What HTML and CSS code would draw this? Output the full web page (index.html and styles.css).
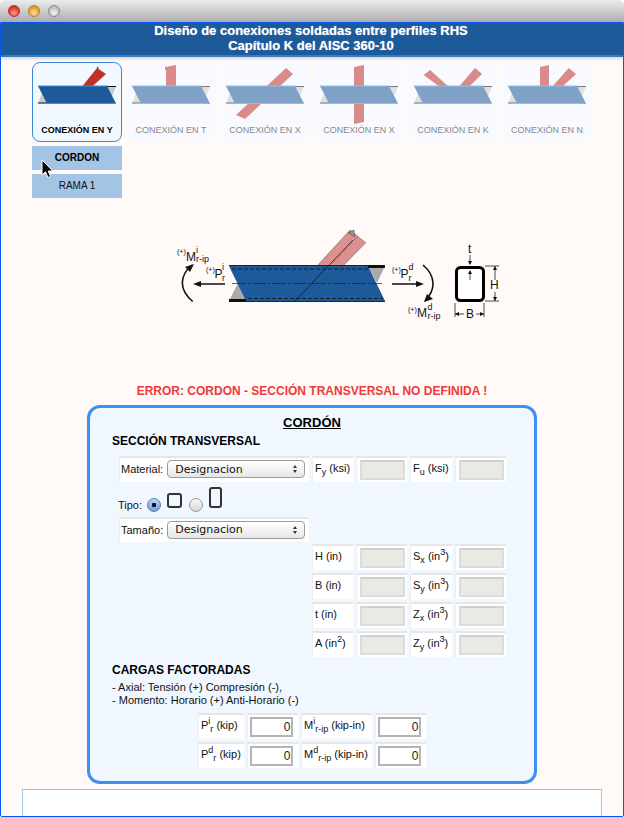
FILE: index.html
```html
<!DOCTYPE html>
<html lang="es">
<head>
    <meta charset="UTF-8">
    <meta name="viewport" content="width=device-width, initial-scale=1.0">
    <title>Diseño de conexiones soldadas entre perfiles RHS</title>
    <link rel="stylesheet" href="styles.css">
</head>
<body>
    <svg class="defs">
        <symbol id="chord" viewBox="0 0 90 60" overflow="visible">
            <polygon points="75,24 84,24 79.5,36" fill="#c9c9c9"/>
            <rect x="75" y="24" width="9" height="1" fill="#111"/>
            <polygon points="6,41.5 15,41.5 10.5,30" fill="#c9c9c9"/>
            <rect x="6" y="40.5" width="9" height="1" fill="#111"/>
            <polygon points="6,24 75,24 84,41.5 15,41.5" fill="#1d5a99"/>
            <path d="M6 24H75M15 41.5H84" stroke="#3d8ee6" stroke-width="1"/>
        </symbol>
    </svg>

    <div class="titlebar">
        <span class="light red"></span>
        <span class="light orange"></span>
        <span class="light gray"></span>
    </div>

    <div class="frame">
        <div class="header">Diseño de conexiones soldadas entre perfiles RHS<br>Capítulo K del AISC 360-10</div>

        <div class="tabs">
            <div class="tab active">
                <svg viewBox="1 1 88 60">
                    <polygon points="65,6 74,12 59.7,25 49.7,25" fill="#c0302a"/>
                    <polygon points="65,6 67,7.5 65.5,4" fill="#333"/>
                    <use href="#chord" width="90" height="60"/>
                </svg>
                <span>CONEXIÓN EN Y</span>
            </div>
            <div class="tab">
                <svg viewBox="1 1 88 60">
                    <polygon points="40,5 50,3 50,25 40,25" fill="#c0302a"/>
                    <polygon points="39,3 41,8 39,8" fill="#555"/>
                    <use href="#chord" width="90" height="60"/>
                </svg>
                <span>CONEXIÓN EN T</span>
            </div>
            <div class="tab">
                <svg viewBox="1 1 88 60">
                    <polygon points="66,6 73,12 25,57 16,53" fill="#c0302a"/>
                    <use href="#chord" width="90" height="60"/>
                </svg>
                <span>CONEXIÓN EN X</span>
            </div>
            <div class="tab">
                <svg viewBox="1 1 88 60">
                    <polygon points="40,5 50,3 50,60 40,62" fill="#c0302a"/>
                    <use href="#chord" width="90" height="60"/>
                </svg>
                <span>CONEXIÓN EN X</span>
            </div>
            <div class="tab">
                <svg viewBox="1 1 88 60">
                    <polygon points="22,8 15.6,13 32,25 41,25" fill="#c0302a"/>
                    <polygon points="67,6 74,12 60.7,25 50.7,25" fill="#c0302a"/>
                    <use href="#chord" width="90" height="60"/>
                </svg>
                <span>CONEXIÓN EN K</span>
            </div>
            <div class="tab">
                <svg viewBox="1 1 88 60">
                    <polygon points="38,5 47,3 47,25 38,25" fill="#c0302a"/>
                    <polygon points="66.7,6 74,12 60,25 50,25" fill="#c0302a"/>
                    <use href="#chord" width="90" height="60"/>
                </svg>
                <span>CONEXIÓN EN N</span>
            </div>
        </div>

        <div class="member selected">CORDON</div>
        <div class="member">RAMA 1</div>

        <svg class="diagram" width="340" height="110" viewBox="0 0 340 110">
            <!-- rama -->
            <polygon points="180,10 195.7,22.7 173,46 147,46" fill="#dc9090" stroke="#555" stroke-width=".5"/>
            <path d="M188 16L160 46" stroke="#a33" stroke-width=".5" stroke-dasharray="6 2"/>
            <polygon points="178.5,13 184,10 184.5,16.500" fill="#999" stroke="#333" stroke-width=".5"/>
            <!-- cordon -->
            <polygon points="198,46 215,46 207,63" fill="#aaa"/>
            <polygon points="59,81 76,81 68,63" fill="#aaa"/>
            <polygon points="59,46 198,46 215,81 76,81" fill="#1d5a99"/>
            <rect x="198" y="45" width="17" height="3" fill="#111"/>
            <rect x="59" y="79" width="17" height="3" fill="#111"/>
            <path d="M59 45.500H198M76 81.500H215" stroke="#222" stroke-width="1"/>
            <path d="M62 49H200M78 78.500H213" stroke="#111" stroke-width=".8" stroke-dasharray="4 2"/>
            <path d="M62 63.500H212" stroke="#222" stroke-width=".7" stroke-dasharray="14 2 2 2"/>
            <path d="M125 81L183 20" stroke="#111" stroke-width=".7"/>
            <!-- fuerzas -->
            <g class="force">
                <path d="M55 64H27M222 64H250"/>
                <path d="M22.700 81.500C9 70 9 56 22 45M253 45C266 56 266 70 255 81"/>
            </g>
            <g class="heads">
                <polygon points="23,64 31,61 31,67"/>
                <polygon points="254,64 246,61 246,67"/>
                <polygon points="24,44 15,47 20,52"/>
                <polygon points="254,82 263,79 257,74"/>
            </g>
            <g class="label">
                <text x="7" y="34" class="tiny">(+)</text><text x="16" y="41">M</text><text x="26" y="33" class="small">i</text><text x="26" y="42" class="small">r-ip</text>
                <text x="36" y="52" class="tiny">(+)</text><text x="44.500" y="58">P</text><text x="52" y="50" class="small">i</text><text x="52" y="61" class="small">r</text>
                <text x="222" y="52" class="tiny">(+)</text><text x="230.500" y="58">P</text><text x="238.500" y="50" class="small">d</text><text x="238.500" y="61" class="small">r</text>
                <text x="238" y="92" class="tiny">(+)</text><text x="247" y="97">M</text><text x="257.500" y="90" class="small">d</text><text x="257.500" y="99" class="small">r-ip</text>
            </g>
            <!-- seccion -->
            <rect x="286.500" y="47.500" width="27" height="33" rx="4" fill="#fff" stroke="#000" stroke-width="3"/>
            <g class="dim">
                <path d="M300 35V44M300 52V60M315 46H329M315 81H329M325 46V60M325 72V81M285 83V97M314 83V97M285 94H294M306 94H314"/>
            </g>
            <g class="heads">
                <polygon points="300,45 298,41 302,41"/>
                <polygon points="300,50 298,54 302,54"/>
                <polygon points="325,46 323,50 327,50"/>
                <polygon points="325,81 323,77 327,77"/>
                <polygon points="285,94 289,92 289,96"/>
                <polygon points="314,94 310,92 310,96"/>
            </g>
            <g class="label">
                <text x="298" y="33">t</text>
                <text x="320" y="69">H</text>
                <text x="296" y="98">B</text>
            </g>
        </svg>

        <div class="error">ERROR: CORDON - SECCIÓN TRANSVERSAL NO DEFINIDA !</div>

        <div class="panel">
            <div class="panel-title">CORDÓN</div>
            <div class="heading first">SECCIÓN TRANSVERSAL</div>

            <div class="row-top">
                <div class="cell pick">
                    <span>Material:</span>
                    <span class="select"><select><option>Designacion</option></select></span>
                </div>
                <div class="cell">F<sub>y</sub> (ksi)</div>
                <div class="cell box"><input disabled></div>
                <div class="cell">F<sub>u</sub> (ksi)</div>
                <div class="cell box"><input disabled></div>
            </div>

            <div class="tipo">
                <span class="tipo-label">Tipo:</span>
                <input type="radio" name="tipo" class="radio" checked>
                <span class="shape square"></span>
                <input type="radio" name="tipo" class="radio">
                <span class="shape tall"></span>
            </div>

            <div class="cell pick size">
                <span>Tamaño:</span>
                <span class="select"><select><option>Designacion</option></select></span>
            </div>

            <div class="props">
                <div class="cell">H (in)</div>
                <div class="cell box"><input disabled></div>
                <div class="cell">S<sub>x</sub> (in<sup>3</sup>)</div>
                <div class="cell box"><input disabled></div>
                <div class="cell">B (in)</div>
                <div class="cell box"><input disabled></div>
                <div class="cell">S<sub>y</sub> (in<sup>3</sup>)</div>
                <div class="cell box"><input disabled></div>
                <div class="cell">t (in)</div>
                <div class="cell box"><input disabled></div>
                <div class="cell">Z<sub>x</sub> (in<sup>3</sup>)</div>
                <div class="cell box"><input disabled></div>
                <div class="cell">A (in<sup>2</sup>)</div>
                <div class="cell box"><input disabled></div>
                <div class="cell">Z<sub>y</sub> (in<sup>3</sup>)</div>
                <div class="cell box"><input disabled></div>
            </div>

            <div class="heading">CARGAS FACTORADAS</div>
            <p class="notes">- Axial: Tensión (+) Compresión (-),<br>- Momento: Horario (+) Anti-Horario (-)</p>

            <div class="loads">
                <div class="cell">P<sup>i</sup><sub>r</sub> (kip)</div>
                <div class="cell box"><input class="value" value="0"></div>
                <div class="cell">M<sup>i</sup><sub>r-ip</sub> (kip-in)</div>
                <div class="cell box"><input class="value" value="0"></div>
                <div class="cell">P<sup>d</sup><sub>r</sub> (kip)</div>
                <div class="cell box"><input class="value" value="0"></div>
                <div class="cell">M<sup>d</sup><sub>r-ip</sub> (kip-in)</div>
                <div class="cell box"><input class="value" value="0"></div>
            </div>
        </div>

        <div class="results"></div>
    </div>

    <svg class="cursor" width="14" height="20" viewBox="0 0 14 20">
        <path d="M1 1V16L4.500 12.800L7 18.500L9.500 17.400L7.200 12H11.800Z" fill="#000" stroke="#fff" stroke-width="1"/>
    </svg>
</body>
</html>
```

FILE: styles.css
```css
* {
    box-sizing: border-box;
}
html, body {
    margin: 0;
    height: 817px;
    overflow: hidden;
    background: #fff;
}
body {
    font-family: "Liberation Sans", Arial, sans-serif;
    font-size: 11px;
    color: #111;
    position: relative;
}
.defs {
    display: none;
}

/* ventana */
.titlebar {
    height: 22px;
    display: flex;
    align-items: center;
    gap: 8px;
    padding-left: 8px;
    border-radius: 5px 5px 0 0;
    background: linear-gradient(#ececec, #adadad);
}
.light {
    width: 12px;
    height: 12px;
    border-radius: 50%;
    border: 1px solid #888;
}
.red {
    background: radial-gradient(circle at 50% 70%, #ff9a90, #d8302a 70%);
    border-color: #a33;
}
.orange {
    background: radial-gradient(circle at 50% 70%, #ffe09a, #e09a20 70%);
    border-color: #b08030;
}
.gray {
    background: radial-gradient(circle at 50% 70%, #f4f4f4, #bdbdbd 70%);
}
.frame {
    height: 795px;
    border: 1px solid #0b55f2;
    border-radius: 0 0 2px 2px;
    background: #fff9f8;
    overflow: hidden;
}
.header {
    height: 34px;
    padding: 0 2px 4px 0;
    background: #1d5a99;
    box-shadow: inset 0 -2px 0 #3a7cc4, 0 2px 3px rgba(0,0,0,0.15);
    color: #fff;
    font-size: 13px;
    font-weight: bold;
    line-height: 15px;
    text-align: center;
    text-shadow: 0 0 1px rgba(255,255,255,0.6);
}

/* tipos de conexion */
.tabs {
    display: flex;
    gap: 4px;
    margin: 5px 0 0 31px;
}
.tab {
    width: 90px;
    height: 80px;
    display: flex;
    flex-direction: column;
    align-items: center;
    background: #f8faff;
    border: 1px solid transparent;
    border-radius: 8px;
    font-size: 9px;
    line-height: 12px;
    color: #888;
}
.tab svg {
    display: block;
    width: 88px;
    height: 60px;
    margin-bottom: 1px;
    overflow: visible;
    opacity: 0.55;
}
.tab.active {
    background: #f2f8ff;
    border-color: #3a86dc;
    color: #000;
    font-weight: bold;
}
.tab.active svg {
    opacity: 1;
}
.member {
    width: 90px;
    height: 24px;
    margin: 4px 0 0 31px;
    background: #a3c4e4;
    font-size: 10px;
    line-height: 24px;
    text-align: center;
}
.member.selected {
    font-weight: bold;
    color: #000;
}

/* esquema */
.diagram {
    display: block;
    margin: 22px 0 0 169px;
}
.force {
    fill: none;
    stroke: #111;
    stroke-width: 1.6;
}
.heads {
    fill: #111;
}
.dim {
    fill: none;
    stroke: #222;
    stroke-width: 0.8;
}
.label {
    font-size: 12px;
    fill: #111;
}
.label .tiny {
    font-size: 7px;
}
.label .small {
    font-size: 9px;
}

.error {
    margin-top: 54px;
    font-size: 12px;
    font-weight: bold;
    line-height: 14px;
    color: #ee3a3a;
    text-align: center;
}

/* panel */
.panel {
    width: 450px;
    height: 379px;
    margin: 7px 0 0 86px;
    padding: 7px 0 0 22px;
    background: #f0f7ff;
    border: 3px solid #3c90f0;
    border-radius: 13px;
}
.panel-title {
    margin-left: -22px;
    font-size: 13px;
    font-weight: bold;
    line-height: 15px;
    text-decoration: underline;
    text-align: center;
    color: #000;
}
.heading {
    margin-top: 6px;
    font-size: 12px;
    font-weight: bold;
    line-height: 14px;
    color: #000;
}
.heading.first {
    margin-top: 4px;
}
.cell {
    height: 26px;
    padding-left: 2px;
    background: #fff;
    border-top: 2px solid #e6e6e6;
    border-left: 1px solid #eeeeee;
    line-height: 20px;
    white-space: nowrap;
}
.cell sub, .cell sup {
    font-size: 9px;
    line-height: 0;
}
.box {
    display: flex;
    align-items: center;
    justify-content: center;
    padding-left: 0;
    padding-bottom: 1px;
}
.box input {
    width: 45px;
    height: 20px;
    padding: 0 2px;
    background: #eaeae4;
    border: 2px solid #dcdcdc;
    border-top-color: #cfcfcf;
}
.box input.value {
    width: 43px;
    margin-left: -4px;
    padding: 0;
    background: #fff;
    border-color: #b4b4b4;
    font-family: "Liberation Sans", Arial, sans-serif;
    font-size: 12px;
    color: #222;
    text-align: right;
}
.row-top {
    display: grid;
    grid-template-columns: 190px 41px 51px 42px 51px;
    column-gap: 3px;
    margin: 8px 0 0 7px;
}
.pick {
    display: flex;
    align-items: center;
    gap: 4px;
    padding: 0 0 2px 1px;
    line-height: 16px;
}
.size {
    width: 190px;
    height: 25px;
    margin-left: 7px;
}
.select {
    position: relative;
    display: block;
}
.select select {
    display: block;
    width: 138px;
    height: 18px;
    padding: 0 0 0 7px;
    appearance: none;
    background: linear-gradient(#ffffff, #e6e6e6);
    border: 1px solid #9c9c9c;
    border-radius: 4px;
    font-family: "DejaVu Sans", sans-serif;
    font-size: 11px;
    color: #111;
}
.select::before, .select::after {
    content: "";
    position: absolute;
    right: 8px;
    border-left: 2.5px solid transparent;
    border-right: 2.5px solid transparent;
}
.select::before {
    top: 5px;
    border-bottom: 3px solid #333;
}
.select::after {
    top: 10px;
    border-top: 3px solid #333;
}
.tipo {
    height: 35px;
    display: flex;
    align-items: flex-end;
    margin-left: 6px;
    padding-bottom: 9px;
}
.tipo-label {
    width: 29px;
    line-height: 14px;
    margin-bottom: -4px;
}
.radio {
    appearance: none;
    width: 14px;
    height: 14px;
    margin: 0 6px -4px 0;
    border: 1px solid #9a9a9a;
    border-radius: 50%;
    background: linear-gradient(#f8f8f8, #d8d8d8);
}
.radio:checked {
    border-color: #5a7fb0;
    background: radial-gradient(circle, #111 0 2px, transparent 2.5px), linear-gradient(#bcd4f4, #6f9fe0);
}
.shape {
    display: block;
    margin-right: 7px;
    border: 2px solid #333;
    border-radius: 3px;
}
.square {
    width: 15px;
    height: 15px;
}
.tall {
    width: 13px;
    height: 21px;
}
.props {
    display: grid;
    grid-template-columns: 41px 51px 42px 51px;
    gap: 3px;
    margin: 2px 0 0 200px;
}
.notes {
    margin: 4px 0 0;
    line-height: 13px;
}
.loads {
    display: grid;
    grid-template-columns: 46px 51px 71px 51px;
    gap: 3px;
    margin: 6px 0 0 86px;
}

.results {
    width: 580px;
    height: 40px;
    margin: 5px 0 0 21px;
    background: #fff;
    border: 1px solid #a3c4e4;
}
.cursor {
    position: absolute;
    left: 41px;
    top: 159px;
}
```
